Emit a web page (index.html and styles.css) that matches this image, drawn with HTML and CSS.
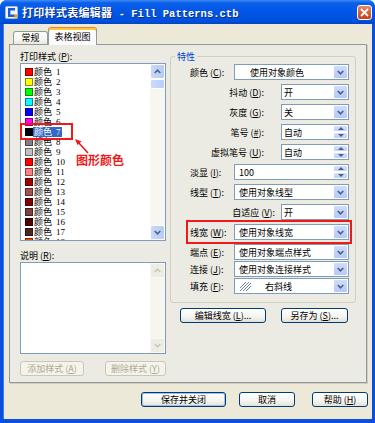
FILE: index.html
```html
<!DOCTYPE html>
<html lang="zh-CN">
<head>
    <meta charset="UTF-8">
    <meta name="viewport" content="width=device-width, initial-scale=1.0">
    <title>打印样式表编辑器</title>
    <link rel="stylesheet" href="styles.css">
</head>
<body>
<div class="window">
    <div class="titlebar">
        <svg class="appicon" width="13" height="13" viewBox="0 0 13 13">
            <rect x="0.5" y="0.5" width="12" height="12" rx="1" fill="#f4f4f4" stroke="#9fb6e0"/>
            <path d="M10 3.2 H4.2 V9.8 H10" fill="none" stroke="#1b5fd6" stroke-width="2.4"/>
            <rect x="9" y="8.5" width="3" height="3" fill="#f08c1e"/>
        </svg>
        <span class="title"><span class="cn">打印样式表编辑器</span><span class="en"> - Fill Patterns.ctb</span></span>
        <div class="closebtn">
            <svg width="9" height="9" viewBox="0 0 9 9"><path d="M1 1 L8 8 M8 1 L1 8" stroke="#fff" stroke-width="1.8"/></svg>
        </div>
    </div>

    <div class="client">
        <div class="tabs">
            <div class="tab">常规</div>
            <div class="tab active">表格视图</div>
        </div>

        <div class="panel">
            <div class="leftcol">
                <div class="lbl">打印样式 (<u>P</u>):</div>
                <div class="listbox">
                    <div class="items">
                        <div class="row"><i class="sw" style="background:#ff0000"></i><span class="nm">颜色<b>1</b></span></div>
                        <div class="row"><i class="sw" style="background:#ffff00"></i><span class="nm">颜色<b>2</b></span></div>
                        <div class="row"><i class="sw" style="background:#00ff00"></i><span class="nm">颜色<b>3</b></span></div>
                        <div class="row"><i class="sw" style="background:#00ffff"></i><span class="nm">颜色<b>4</b></span></div>
                        <div class="row"><i class="sw" style="background:#0000ff"></i><span class="nm">颜色<b>5</b></span></div>
                        <div class="row"><i class="sw" style="background:#ff00ff"></i><span class="nm">颜色<b>6</b></span></div>
                        <div class="row"><i class="sw" style="background:#000000"></i><span class="nm sel">颜色<b>7</b></span></div>
                        <div class="row"><i class="sw" style="background:#808080"></i><span class="nm">颜色<b>8</b></span></div>
                        <div class="row"><i class="sw" style="background:#c0c0c0"></i><span class="nm">颜色<b>9</b></span></div>
                        <div class="row"><i class="sw" style="background:#ff0000"></i><span class="nm">颜色<b>10</b></span></div>
                        <div class="row"><i class="sw" style="background:#ff7f7f"></i><span class="nm">颜色<b>11</b></span></div>
                        <div class="row"><i class="sw" style="background:#a50000"></i><span class="nm">颜色<b>12</b></span></div>
                        <div class="row"><i class="sw" style="background:#a55252"></i><span class="nm">颜色<b>13</b></span></div>
                        <div class="row"><i class="sw" style="background:#7f0000"></i><span class="nm">颜色<b>14</b></span></div>
                        <div class="row"><i class="sw" style="background:#7f3f3f"></i><span class="nm">颜色<b>15</b></span></div>
                        <div class="row"><i class="sw" style="background:#4c0000"></i><span class="nm">颜色<b>16</b></span></div>
                        <div class="row"><i class="sw" style="background:#4c2626"></i><span class="nm">颜色<b>17</b></span></div>
                        <div class="row"><i class="sw" style="background:#ff3f00"></i><span class="nm">颜色<b>18</b></span></div>
                    </div>
                    <div class="vscroll">
                        <div class="sbtn"><svg width="7" height="5" viewBox="0 0 7 5"><path d="M0.7 4 L3.5 1.2 L6.3 4" fill="none" stroke="#4d6185" stroke-width="1.6"/></svg></div>
                        <div class="thumb"></div>
                        <div class="track"></div>
                        <div class="sbtn"><svg width="7" height="5" viewBox="0 0 7 5"><path d="M0.7 1 L3.5 3.8 L6.3 1" fill="none" stroke="#4d6185" stroke-width="1.6"/></svg></div>
                    </div>
                </div>

                <div class="lbl desc">说明 (<u>R</u>):</div>
                <div class="textbox">
                    <div class="textarea"></div>
                    <div class="vscroll off">
                        <div class="sbtn"><svg width="7" height="5" viewBox="0 0 7 5"><path d="M0.7 4 L3.5 1.2 L6.3 4" fill="none" stroke="#c9c7ba" stroke-width="1.6"/></svg></div>
                        <div class="track"></div>
                        <div class="sbtn"><svg width="7" height="5" viewBox="0 0 7 5"><path d="M0.7 1 L3.5 3.8 L6.3 1" fill="none" stroke="#c9c7ba" stroke-width="1.6"/></svg></div>
                    </div>
                </div>

                <div class="btnrow">
                    <button class="btn off add">添加样式 (<u>A</u>)</button>
                    <button class="btn off del">删除样式 (<u>Y</u>)</button>
                </div>
            </div>

            <div class="rightcol">
                <fieldset class="group">
                    <legend>特性</legend>

                    <div class="prop">
                        <span class="pl">颜色 (<u>C</u>):</span>
                        <div class="combo wide"><span class="val indent">使用对象颜色</span><span class="dd"><svg width="7" height="5" viewBox="0 0 7 5"><path d="M0.7 1 L3.5 3.8 L6.3 1" fill="none" stroke="#4d6185" stroke-width="1.6"/></svg></span></div>
                    </div>
                    <div class="prop">
                        <span class="pl right">抖动 (<u>D</u>):</span>
                        <div class="combo narrow"><span class="val">开</span><span class="dd"><svg width="7" height="5" viewBox="0 0 7 5"><path d="M0.7 1 L3.5 3.8 L6.3 1" fill="none" stroke="#4d6185" stroke-width="1.6"/></svg></span></div>
                    </div>
                    <div class="prop">
                        <span class="pl right">灰度 (<u>G</u>):</span>
                        <div class="combo narrow"><span class="val">关</span><span class="dd"><svg width="7" height="5" viewBox="0 0 7 5"><path d="M0.7 1 L3.5 3.8 L6.3 1" fill="none" stroke="#4d6185" stroke-width="1.6"/></svg></span></div>
                    </div>
                    <div class="prop">
                        <span class="pl right">笔号 (<u>#</u>):</span>
                        <div class="combo narrow"><span class="val">自动</span><span class="spin"><i class="up"></i><i class="dn"></i></span></div>
                    </div>
                    <div class="prop">
                        <span class="pl right">虚拟笔号 (<u>U</u>):</span>
                        <div class="combo narrow"><span class="val">自动</span><span class="spin"><i class="up"></i><i class="dn"></i></span></div>
                    </div>
                    <div class="prop">
                        <span class="pl">淡显 (<u>I</u>):</span>
                        <div class="combo wide"><span class="val">100</span><span class="spin"><i class="up"></i><i class="dn"></i></span></div>
                    </div>
                    <div class="prop">
                        <span class="pl">线型 (<u>T</u>):</span>
                        <div class="combo wide"><span class="val">使用对象线型</span><span class="dd"><svg width="7" height="5" viewBox="0 0 7 5"><path d="M0.7 1 L3.5 3.8 L6.3 1" fill="none" stroke="#4d6185" stroke-width="1.6"/></svg></span></div>
                    </div>
                    <div class="prop">
                        <span class="pl right near">自适应 (<u>V</u>):</span>
                        <div class="combo narrow"><span class="val">开</span><span class="dd"><svg width="7" height="5" viewBox="0 0 7 5"><path d="M0.7 1 L3.5 3.8 L6.3 1" fill="none" stroke="#4d6185" stroke-width="1.6"/></svg></span></div>
                    </div>
                    <div class="prop">
                        <span class="pl">线宽 (<u>W</u>):</span>
                        <div class="combo wide"><span class="val">使用对象线宽</span><span class="dd"><svg width="7" height="5" viewBox="0 0 7 5"><path d="M0.7 1 L3.5 3.8 L6.3 1" fill="none" stroke="#4d6185" stroke-width="1.6"/></svg></span></div>
                    </div>
                    <div class="prop">
                        <span class="pl">端点 (<u>E</u>):</span>
                        <div class="combo wide"><span class="val">使用对象端点样式</span><span class="dd"><svg width="7" height="5" viewBox="0 0 7 5"><path d="M0.7 1 L3.5 3.8 L6.3 1" fill="none" stroke="#4d6185" stroke-width="1.6"/></svg></span></div>
                    </div>
                    <div class="prop tight">
                        <span class="pl">连接 (<u>J</u>):</span>
                        <div class="combo wide"><span class="val">使用对象连接样式</span><span class="dd"><svg width="7" height="5" viewBox="0 0 7 5"><path d="M0.7 1 L3.5 3.8 L6.3 1" fill="none" stroke="#4d6185" stroke-width="1.6"/></svg></span></div>
                    </div>
                    <div class="prop tight">
                        <span class="pl">填充 (<u>F</u>):</span>
                        <div class="combo wide">
                            <svg class="hatch" width="11" height="9" viewBox="0 0 11 9">
                                <path d="M0 9 L9 0 M3 9 L11 1 M-3 9 L6 0 M6 9 L11 4" stroke="#6f7fa8" stroke-width="1"/>
                            </svg>
                            <span class="val">右斜线</span>
                            <span class="dd"><svg width="7" height="5" viewBox="0 0 7 5"><path d="M0.7 1 L3.5 3.8 L6.3 1" fill="none" stroke="#4d6185" stroke-width="1.6"/></svg></span>
                        </div>
                    </div>
                </fieldset>

                <div class="btnrow2">
                    <button class="btn edit">编辑线宽 (<u>L</u>)...</button>
                    <button class="btn saveas">另存为 (<u>S</u>)...</button>
                </div>
            </div>

            <!-- annotations drawn over the dialog -->
            <div class="mark mark-list"></div>
            <svg class="arrow" width="20" height="20" viewBox="0 0 20 20">
                <path d="M15 17 L4 5" stroke="#f01818" stroke-width="1.6"/>
                <path d="M2 3 L8.5 5.5 L4.5 9 Z" fill="#f01818"/>
            </svg>
            <div class="note">图形颜色</div>
            <div class="mark mark-width"></div>
        </div>

        <div class="footer">
            <button class="btn default save">保存并关闭</button>
            <button class="btn cancel">取消</button>
            <button class="btn help">帮助 (<u>H</u>)</button>
        </div>
    </div>
</div>
</body>
</html>
```

FILE: styles.css
```css
body {
    margin: 0;
    font-family: "Noto Sans CJK SC", "Liberation Sans", sans-serif;
    font-size: 9px;
    color: #000;
}

.window {
    width: 375px;
    height: 423px;
    box-sizing: border-box;
    display: flex;
    flex-direction: column;
    background: #0a50dc;
    border-radius: 7px 7px 0 0;
    overflow: hidden;
}

/* title bar */
.titlebar {
    height: 24px;
    display: flex;
    align-items: center;
    padding: 0 3px 0 5px;
    background: linear-gradient(#3d8ef5 0%, #0b5fea 12%, #0056e5 50%, #0051dc 85%, #0044c8 100%);
}
.appicon {
    margin-right: 4px;
}
.title {
    color: #fff;
    font-weight: bold;
    text-shadow: 1px 1px 0 #0a2c7a;
    white-space: nowrap;
}
.title .cn {
    font-size: 11px;
    letter-spacing: 0.3px;
}
.title .en {
    font-family: "Liberation Mono", monospace;
    font-size: 10.5px;
}
.closebtn {
    margin-left: auto;
    width: 15px;
    height: 15px;
    box-sizing: border-box;
    border: 1px solid #fff;
    border-radius: 3px;
    background: linear-gradient(#e8896a, #d4572f 60%, #c2421d);
    display: flex;
    align-items: center;
    justify-content: center;
}

/* client area */
.client {
    flex: 1;
    margin: 0 3px 4px;
    background: #ece9d8;
    padding-top: 3px;
    box-shadow: inset 1px 0 0 #3f7bf0;
}

.tabs {
    display: flex;
    align-items: flex-end;
    height: 17px;
    padding-left: 10px;
}
.tab {
    height: 13px;
    width: 35px;
    box-sizing: border-box;
    border: 1px solid #919b9c;
    border-bottom: none;
    border-radius: 3px 3px 0 0;
    background: linear-gradient(#fefefe, #f4f3ee 70%, #e7e6df);
    text-align: center;
    line-height: 12px;
}
.tab.active {
    width: 49px;
    height: 18px;
    margin-bottom: -1px;
    position: relative;
    z-index: 1;
    border-top: 1px solid #e68b2c;
    box-shadow: inset 0 2px 0 #ffc83c;
    background: #fcfcfe;
    line-height: 18px;
}

.panel {
    position: relative;
    margin-left: 6px;
    width: 358px;
    height: 339px;
    box-sizing: border-box;
    border: 1px solid #919b9c;
    box-shadow: 1px 1px 0 #d0cebf;
    background: #ecebe3;
    padding: 5px 0 0 10px;
    display: flex;
}

/* left column */
.leftcol {
    width: 146px;
}
.lbl {
    height: 13px;
    line-height: 13px;
}
.lbl.desc {
    margin-top: 8px;
}
.listbox {
    height: 178px;
    box-sizing: border-box;
    border: 1px solid #7f9db9;
    background: #fff;
    display: flex;
}
.items {
    flex: 1;
    overflow: hidden;
    padding: 3px 0 0 4px;
}
.row {
    height: 10px;
    display: flex;
    align-items: center;
}
.sw {
    width: 8px;
    height: 8px;
    box-sizing: border-box;
    border: 1px solid rgba(0, 0, 0, 0.45);
}
.nm {
    line-height: 10px;
    padding: 0 1px;
}
.nm b {
    font-weight: normal;
    font-family: "Liberation Serif", serif;
    margin-left: 4px;
}
.nm.sel {
    background: #316ac5;
    color: #fff;
}

.vscroll {
    width: 15px;
    display: flex;
    flex-direction: column;
    background: #f7f6f1;
}
.sbtn {
    height: 15px;
    box-sizing: border-box;
    border: 1px solid #fff;
    border-radius: 2px;
    background: linear-gradient(90deg, #c9d8fc, #b8cbf6);
    display: flex;
    align-items: center;
    justify-content: center;
}
.thumb {
    height: 10px;
    box-sizing: border-box;
    border: 1px solid #fff;
    border-radius: 2px;
    background: linear-gradient(90deg, #cad9fd, #bccefa);
}
.track {
    flex: 1;
}
.vscroll.off {
    background: #f6f5ef;
}
.vscroll.off .sbtn {
    background: #eeede5;
    border-color: #f8f8f4;
}

.textbox {
    height: 92px;
    box-sizing: border-box;
    border: 1px solid #7f9db9;
    background: #fff;
    display: flex;
}
.textarea {
    flex: 1;
}

.btnrow {
    margin-top: 7px;
    display: flex;
    justify-content: space-between;
}

/* buttons */
.btn {
    height: 15px;
    padding: 0;
    box-sizing: border-box;
    border: 1px solid #003c74;
    border-radius: 3px;
    background: linear-gradient(#ffffff, #f4f4f0 60%, #e3e1d8);
    font-family: inherit;
    font-size: 9px;
    line-height: 13px;
    color: #000;
}
.btn.off {
    border-color: #c9c7ba;
    background: #f5f4ea;
    color: #aca899;
}
.btn.default {
    box-shadow: inset 0 0 0 1px #a5bdec;
}
.add { width: 64px; }
.del { width: 61px; }

/* right column */
.rightcol {
    width: 186px;
    margin-left: 4px;
}
.group {
    margin: 0;
    height: 253px;
    box-sizing: border-box;
    border: 1px solid #d0d0bf;
    border-radius: 3px;
    padding: 1px 5px 0 0;
    min-width: 0;
}
.group legend {
    color: #0046d5;
    padding: 0 2px;
    margin-left: 4px;
    line-height: 13px;
}
.prop {
    display: flex;
    align-items: center;
    height: 16px;
    margin-top: 4px;
}
.prop:first-of-type {
    margin-top: 0;
}
.prop.tight {
    margin-top: 1px;
}
.pl {
    width: 63px;
    box-sizing: border-box;
    padding-left: 19px;
    white-space: nowrap;
}
.pl.right {
    width: 110px;
    padding: 0 17px 0 0;
    text-align: right;
}
.pl.right.near {
    padding-right: 6px;
}

.combo {
    height: 16px;
    box-sizing: border-box;
    border: 1px solid #7f9db9;
    background: #fff;
    display: flex;
    align-items: center;
}
.combo.wide { width: 115px; }
.combo.narrow { width: 68px; }
.val {
    padding-left: 4px;
    white-space: nowrap;
}
.narrow .val {
    padding-left: 2px;
}
.val.indent {
    padding-left: 15px;
}
.hatch {
    margin-left: 5px;
}
.hatch + .val {
    padding-left: 14px;
}
.dd {
    margin-left: auto;
    width: 15px;
    height: 14px;
    box-sizing: border-box;
    border: 1px solid #fff;
    border-radius: 2px;
    background: linear-gradient(#cfdcfd, #b5c8f7);
    display: flex;
    align-items: center;
    justify-content: center;
}
.spin {
    margin-left: auto;
    width: 15px;
    height: 14px;
    display: flex;
    flex-direction: column;
}
.spin i {
    flex: 1;
    box-sizing: border-box;
    border: 1px solid #fff;
    border-radius: 2px;
    background: linear-gradient(#d5e0fd, #bccefa);
    display: flex;
    align-items: center;
    justify-content: center;
}
.spin i::after {
    content: "";
    border-left: 3px solid transparent;
    border-right: 3px solid transparent;
}
.spin .up::after {
    border-bottom: 3px solid #4d6185;
}
.spin .dn::after {
    border-top: 3px solid #4d6185;
}

.btnrow2 {
    margin-top: 5px;
    display: flex;
    padding-left: 10px;
    gap: 15px;
}
.edit { width: 86px; }
.saveas { width: 67px; }

/* footer */
.footer {
    margin-top: 9px;
    display: flex;
    justify-content: flex-end;
    padding-right: 4px;
}
.save { width: 85px; }
.cancel { width: 56px; margin-left: 13px; }
.help { width: 56px; margin-left: 17px; }

/* red annotations */
.mark {
    position: absolute;
    border: 2px solid #f01818;
    box-sizing: border-box;
}
.mark-list {
    left: 10px;
    top: 78px;
    width: 53px;
    height: 17px;
}
.mark-width {
    left: 176px;
    top: 175px;
    width: 166px;
    height: 24px;
}
.arrow {
    position: absolute;
    left: 63px;
    top: 91px;
}
.note {
    position: absolute;
    left: 66px;
    top: 108px;
    color: #f01818;
    font-size: 12px;
    font-weight: bold;
    line-height: 14px;
}
```
